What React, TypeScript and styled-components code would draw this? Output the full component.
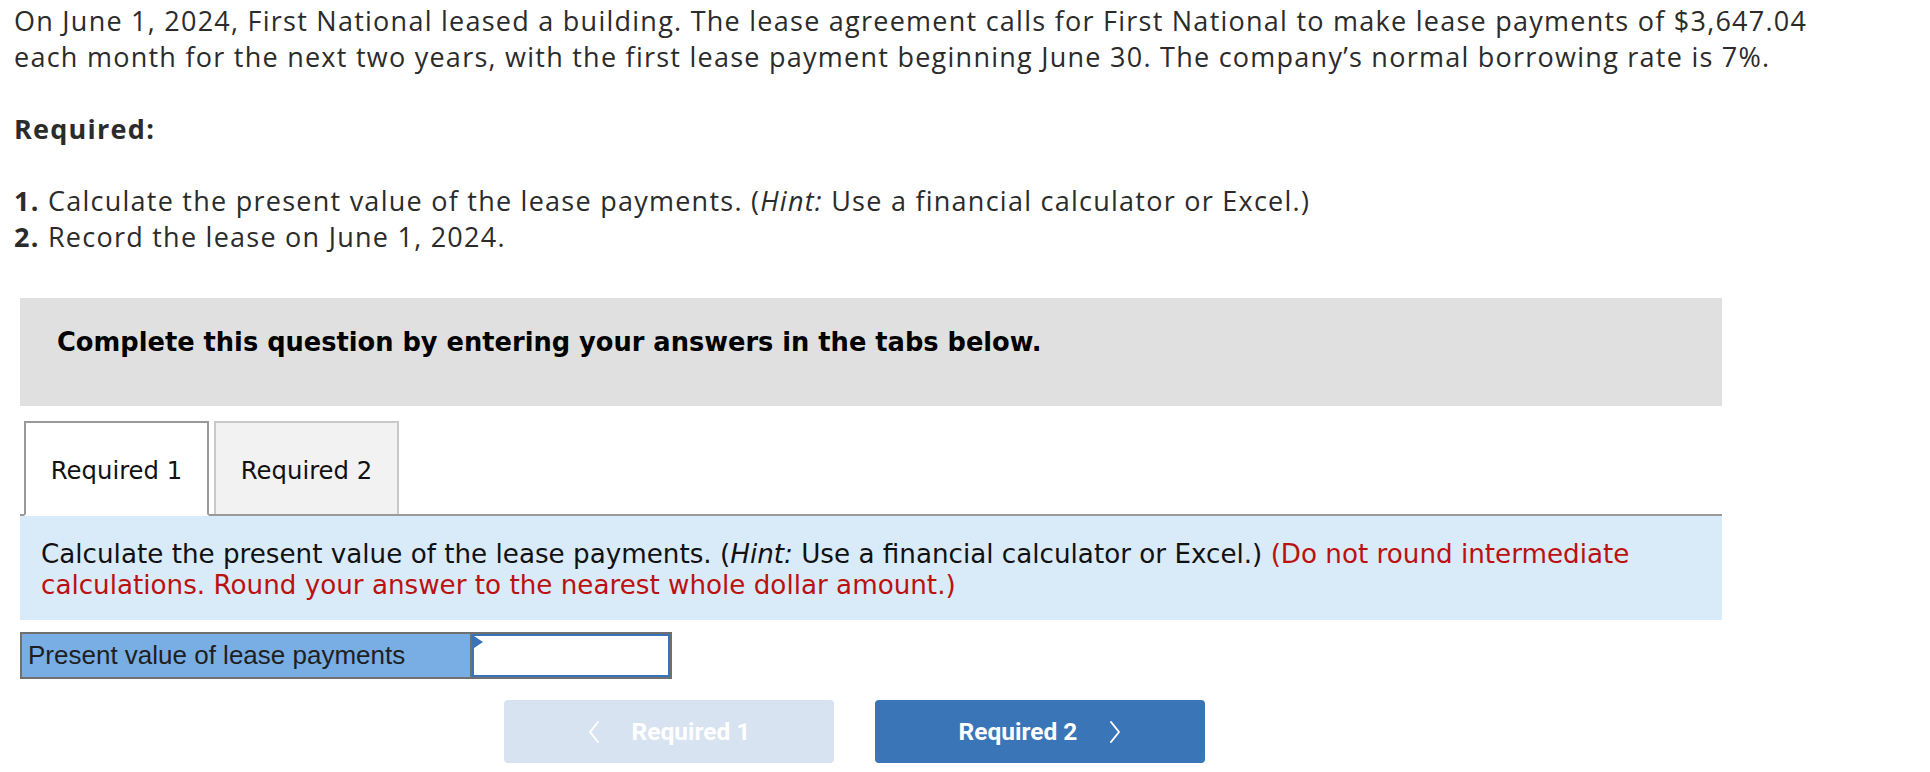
import React from 'react';
import styled, { createGlobalStyle } from 'styled-components';

const GlobalStyle = createGlobalStyle`
  body {
    margin: 0;
    background: #ffffff;
  }
`;

const Page = styled.div`
  padding-top: 3px;
  width: 1930px;
`;

const Prose = styled.div`
  color: #2b2b2b;
  font-family: 'Open Sans', Lato, sans-serif;
  font-size: 27px;
  letter-spacing: 1.25px;
  line-height: 36px;
  padding-left: 14px;

  p {
    margin: 0;
    white-space: nowrap;
  }

  p + p {
    margin-top: 36px;
  }

  strong {
    font-weight: 700;
  }
`;

const Banner = styled.div`
  background: #e0e0e0;
  box-sizing: border-box;
  color: #000;
  font-family: 'DejaVu Sans', Verdana, sans-serif;
  font-size: 25.7px;
  font-weight: 700;
  height: 108px;
  line-height: 28px;
  margin: 43px 0 0 20px;
  padding: 30px 37px 0;
  white-space: nowrap;
  width: 1702px;
`;

const TabList = styled.div`
  align-items: flex-end;
  border-bottom: 2px solid #9a9a9a;
  display: flex;
  gap: 5px;
  margin: 15px 0 0 20px;
  padding-left: 4px;
  width: 1698px;
`;

const Tab = styled.button<{ $active?: boolean }>`
  align-items: center;
  background: ${({ $active }) => ($active ? '#ffffff' : '#f2f2f2')};
  border: 2px solid ${({ $active }) => ($active ? '#9a9a9a' : '#c9c9c9')};
  border-bottom: ${({ $active }) => ($active ? '2px solid #ffffff' : 'none')};
  box-sizing: border-box;
  color: #111;
  display: flex;
  font-family: 'DejaVu Sans', Verdana, sans-serif;
  font-size: 24.3px;
  height: ${({ $active }) => ($active ? '95px' : '93px')};
  justify-content: center;
  margin-bottom: ${({ $active }) => ($active ? '-2px' : '0')};
  padding: 3px 0 0;
  width: 185px;
`;

const Instructions = styled.div`
  background: #d9eaf8;
  box-sizing: border-box;
  color: #111;
  font-family: 'DejaVu Sans', Verdana, sans-serif;
  font-size: 26.2px;
  line-height: 31px;
  margin-left: 20px;
  padding: 23px 21px 19px;
  white-space: nowrap;
  width: 1702px;

  em {
    font-style: italic;
  }
`;

const Note = styled.span`
  color: #bb1111;
`;

const AnswerRow = styled.div`
  border: 2px solid #707070;
  box-sizing: border-box;
  display: flex;
  height: 47px;
  margin: 12px 0 0 20px;
  width: 652px;
`;

const AnswerLabel = styled.div`
  align-items: center;
  background: #78aee3;
  border-right: 2px solid #707070;
  color: #1f1f1f;
  display: flex;
  flex: 1;
  font-family: 'Liberation Sans', Arial, sans-serif;
  font-size: 26px;
  padding-left: 6px;
`;

const AnswerCell = styled.div`
  border: 2px solid #3a73b7;
  box-sizing: border-box;
  position: relative;
  width: 198px;
`;

const Flag = styled.span`
  border-bottom: 6px solid transparent;
  border-left: 9px solid #3a73b7;
  border-top: 6px solid transparent;
  left: 0;
  position: absolute;
  top: 0;
`;

const AnswerInput = styled.input`
  background: transparent;
  border: none;
  box-sizing: border-box;
  font-family: 'Liberation Sans', Arial, sans-serif;
  font-size: 22px;
  height: 100%;
  outline: none;
  padding: 0 8px;
  text-align: right;
  width: 100%;
`;

const NavRow = styled.div`
  display: flex;
  gap: 41px;
  margin: 21px 0 0 504px;
`;

const NavButton = styled.button<{ $disabled?: boolean }>`
  align-items: center;
  background: ${({ $disabled }) => ($disabled ? '#d7e3f0' : '#3a75b8')};
  border: none;
  border-radius: 4px;
  color: #ffffff;
  display: flex;
  font-family: Roboto, 'Liberation Sans', sans-serif;
  font-size: 24.5px;
  font-weight: 700;
  gap: 32px;
  height: 63px;
  justify-content: center;
  width: 330px;
`;

const Chevron = ({ dir }: { dir: 'left' | 'right' }) => (
  <svg width="12" height="24" viewBox="0 0 12 24" fill="none">
    <polyline
      points={dir === 'left' ? '10,2 2,12 10,22' : '2,2 10,12 2,22'}
      stroke="#ffffff"
      strokeWidth="2"
      strokeLinecap="round"
      strokeLinejoin="round"
    />
  </svg>
);

const App: React.FC = () => (
  <Page>
    <GlobalStyle />
    <Prose>
      <p>
        On June 1, 2024, First National leased a building. The lease agreement calls for First National to make lease
        payments of $3,647.04
        <br />
        each month for the next two years, with the first lease payment beginning June 30. The company’s normal
        borrowing rate is 7%.
      </p>
      <p>
        <strong>Required:</strong>
      </p>
      <p>
        <strong>1.</strong> Calculate the present value of the lease payments. (<em>Hint:</em> Use a financial
        calculator or Excel.)
        <br />
        <strong>2.</strong> Record the lease on June 1, 2024.
      </p>
    </Prose>

    <Banner>Complete this question by entering your answers in the tabs below.</Banner>

    <TabList>
      <Tab $active>Required 1</Tab>
      <Tab>Required 2</Tab>
    </TabList>

    <Instructions>
      Calculate the present value of the lease payments. (<em>Hint:</em> Use a financial calculator or Excel.){' '}
      <Note>(Do not round intermediate</Note>
      <br />
      <Note>calculations. Round your answer to the nearest whole dollar amount.)</Note>
    </Instructions>

    <AnswerRow>
      <AnswerLabel>Present value of lease payments</AnswerLabel>
      <AnswerCell>
        <Flag />
        <AnswerInput aria-label="Present value of lease payments" />
      </AnswerCell>
    </AnswerRow>

    <NavRow>
      <NavButton $disabled>
        <Chevron dir="left" />
        Required 1
      </NavButton>
      <NavButton>
        Required 2
        <Chevron dir="right" />
      </NavButton>
    </NavRow>
  </Page>
);

export default App;
